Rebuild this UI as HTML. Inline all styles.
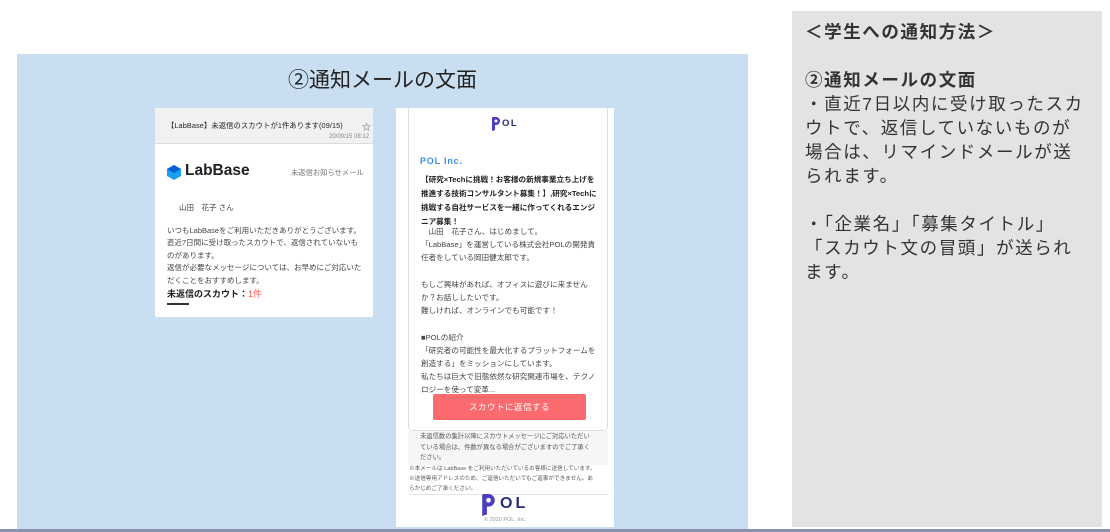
<!DOCTYPE html>
<html><head><meta charset="utf-8"><style>
*{margin:0;padding:0;box-sizing:border-box}
body{width:1110px;height:532px;background:#fff;position:relative;overflow:hidden;font-family:"Liberation Sans","Noto Sans CJK JP",sans-serif;color:#333}
.abs{position:absolute}
.blue{left:17px;top:54px;width:731px;height:476px;background:#c9dff1}
.title{left:17px;top:64px;width:731px;text-align:center;font-size:21px;color:#222}
.gray{left:792px;top:11px;width:310px;height:516px;background:#e3e3e3}
.gtext{left:805px;top:20px;width:300px;font-size:17.5px;line-height:24px;color:#333;letter-spacing:1.6px;white-space:nowrap}
.card1{left:155px;top:108px;width:218px;height:209px;background:#fff}
.card2{left:396px;top:108px;width:218px;height:419px;background:#fff}
.s{font-size:7.3px;line-height:12.6px;color:#444;white-space:nowrap}
.bline{left:0;top:529px;width:1110px;height:3px;background:#8a93ad}
</style></head><body>
<div class="abs blue"></div>
<div class="abs title">②通知メールの文面</div>
<div class="abs gray"></div>
<div class="abs gtext"><b>＜学生への通知方法＞</b><br><br><b>②通知メールの文面</b><br>・直近7日以内に受け取ったスカ<br>ウトで、返信していないものが<br>場合は、リマインドメールが送<br>られます。<br><br>・「企業名」「募集タイトル」<br>「スカウト文の冒頭」が送られ<br>ます。</div>

<div class="abs card1">
 <div class="abs" style="left:0;top:0;width:218px;height:36px;background:#f1f1f1;border-bottom:1px solid #ddd"></div>
 <div class="abs s" style="left:12px;top:12px;font-size:7.3px;color:#222;letter-spacing:.1px">【LabBase】未返信のスカウトが1件あります(09/15)</div>
 <div class="abs" style="left:207px;top:12px;font-size:9px;color:#555">☆</div>
 <div class="abs" style="left:174px;top:26px;font-size:6px;color:#888">20/09/15 08:12</div>
 <svg class="abs" style="left:12px;top:57px" width="14" height="15" viewBox="0 0 14 15"><polygon points="7,0 14,4 14,11 7,15 0,11 0,4" fill="#1aa0f0"/><polygon points="7,0 14,4 7,8 0,4" fill="#0a5ed8"/></svg>
 <div class="abs" style="left:30px;top:54px;font-size:15.5px;font-weight:bold;color:#222">LabBase</div>
 <div class="abs" style="left:136px;top:60px;font-size:7.3px;color:#777">未返信お知らせメール</div>
 <div class="abs s" style="left:24px;top:94px;font-size:7.5px">山田　花子 さん</div>
 <div class="abs s" style="left:12px;top:117px;font-size:7.5px;line-height:12.4px">いつもLabBaseをご利用いただきありがとうございます。<br>直近7日間に受け取ったスカウトで、返信されていないも<br>のがあります。<br>返信が必要なメッセージについては、お早めにご対応いた<br>だくことをおすすめします。</div>
 <div class="abs" style="left:12px;top:179px;font-size:9px;font-weight:bold;color:#222">未返信のスカウト：<span style="color:#f55;font-weight:normal">1件</span></div>
 <div class="abs" style="left:12px;top:195px;width:22px;height:2px;background:#333"></div>
</div>

<div class="abs card2">
 <div class="abs" style="left:12px;top:0;width:200px;height:323px;border:1px solid #ddd;border-top:none;border-radius:0 0 5px 5px"></div>
 <svg class="abs" style="left:96px;top:9px" width="8" height="14" viewBox="0 0 8 14"><path d="M0 1 Q0 0 1 0 H4 A4 4 0 0 1 4 8 H3 V13 L0 14 Z" fill="#4b3fbf"/><circle cx="4" cy="4" r="1.5" fill="#fff"/></svg>
 <div class="abs" style="left:106px;top:10px;font-size:9.5px;font-weight:bold;color:#2a2f7a;letter-spacing:1.5px">OL</div>
 <div class="abs" style="left:24px;top:48px;font-size:9px;font-weight:bold;color:#3b8ff0;letter-spacing:.8px">POL Inc.</div>
 <div class="abs s" style="left:25px;top:65px;font-weight:bold;color:#222;line-height:14px;font-size:7.6px">【研究×Techに挑戦！お客様の新規事業立ち上げを<br>推進する技術コンサルタント募集！】,研究×Techに<br>挑戦する自社サービスを一緒に作ってくれるエンジ<br>ニア募集！</div>
 <div class="abs s" style="left:25px;top:117px;font-size:7.6px;line-height:13.2px">　山田　花子さん、はじめまして。<br>「LabBase」を運営している株式会社POLの開発責<br>任者をしている岡田健太郎です。<br><br>もしご興味があれば、オフィスに遊びに来ません<br>か？お話ししたいです。<br>難しければ、オンラインでも可能です！<br><br>■POLの紹介<br>「研究者の可能性を最大化するプラットフォームを<br>創造する」をミッションにしています。<br>私たちは巨大で旧態依然な研究関連市場を、テクノ<br>ロジーを使って変革...</div>
 <div class="abs" style="left:37px;top:286px;width:153px;height:26px;background:#fb6a6e;border-radius:2px;color:#fff;font-size:8.5px;text-align:center;line-height:26px;letter-spacing:.5px">スカウトに返信する</div>
 <div class="abs" style="left:12px;top:323px;width:200px;height:34px;background:#f6f6f6"></div>
 <div class="abs s" style="left:24px;top:324px;font-size:6.3px;line-height:10.5px;color:#555">未返信数の集計以降にスカウトメッセージにご対応いただい<br>ている場合は、件数が異なる場合がございますのでご了承く<br>ださい。</div>
 <div class="abs s" style="left:13px;top:356px;font-size:5.6px;line-height:10px;color:#555">※本メールは LabBase をご利用いただいているお客様に送信しています。<br>※送信専用アドレスのため、ご返信いただいてもご返事ができません。あ<br>らかじめご了承ください。</div>
 <div class="abs" style="left:13px;top:386px;width:200px;height:1px;background:#e5e5e5"></div>
 <svg class="abs" style="left:86px;top:386px" width="13" height="22" viewBox="0 0 8 14"><path d="M0 1 Q0 0 1 0 H4 A4 4 0 0 1 4 8 H3 V13 L0 14 Z" fill="#4b3fbf"/><circle cx="4" cy="4" r="1.5" fill="#fff"/></svg>
 <div class="abs" style="left:104px;top:387px;font-size:16px;font-weight:bold;color:#2a2f7a;letter-spacing:3px">OL</div>
 <div class="abs" style="left:88px;top:409px;font-size:5.5px;color:#999">© 2020 POL, Inc.</div>
</div>
<div class="abs bline"></div>
</body></html>
